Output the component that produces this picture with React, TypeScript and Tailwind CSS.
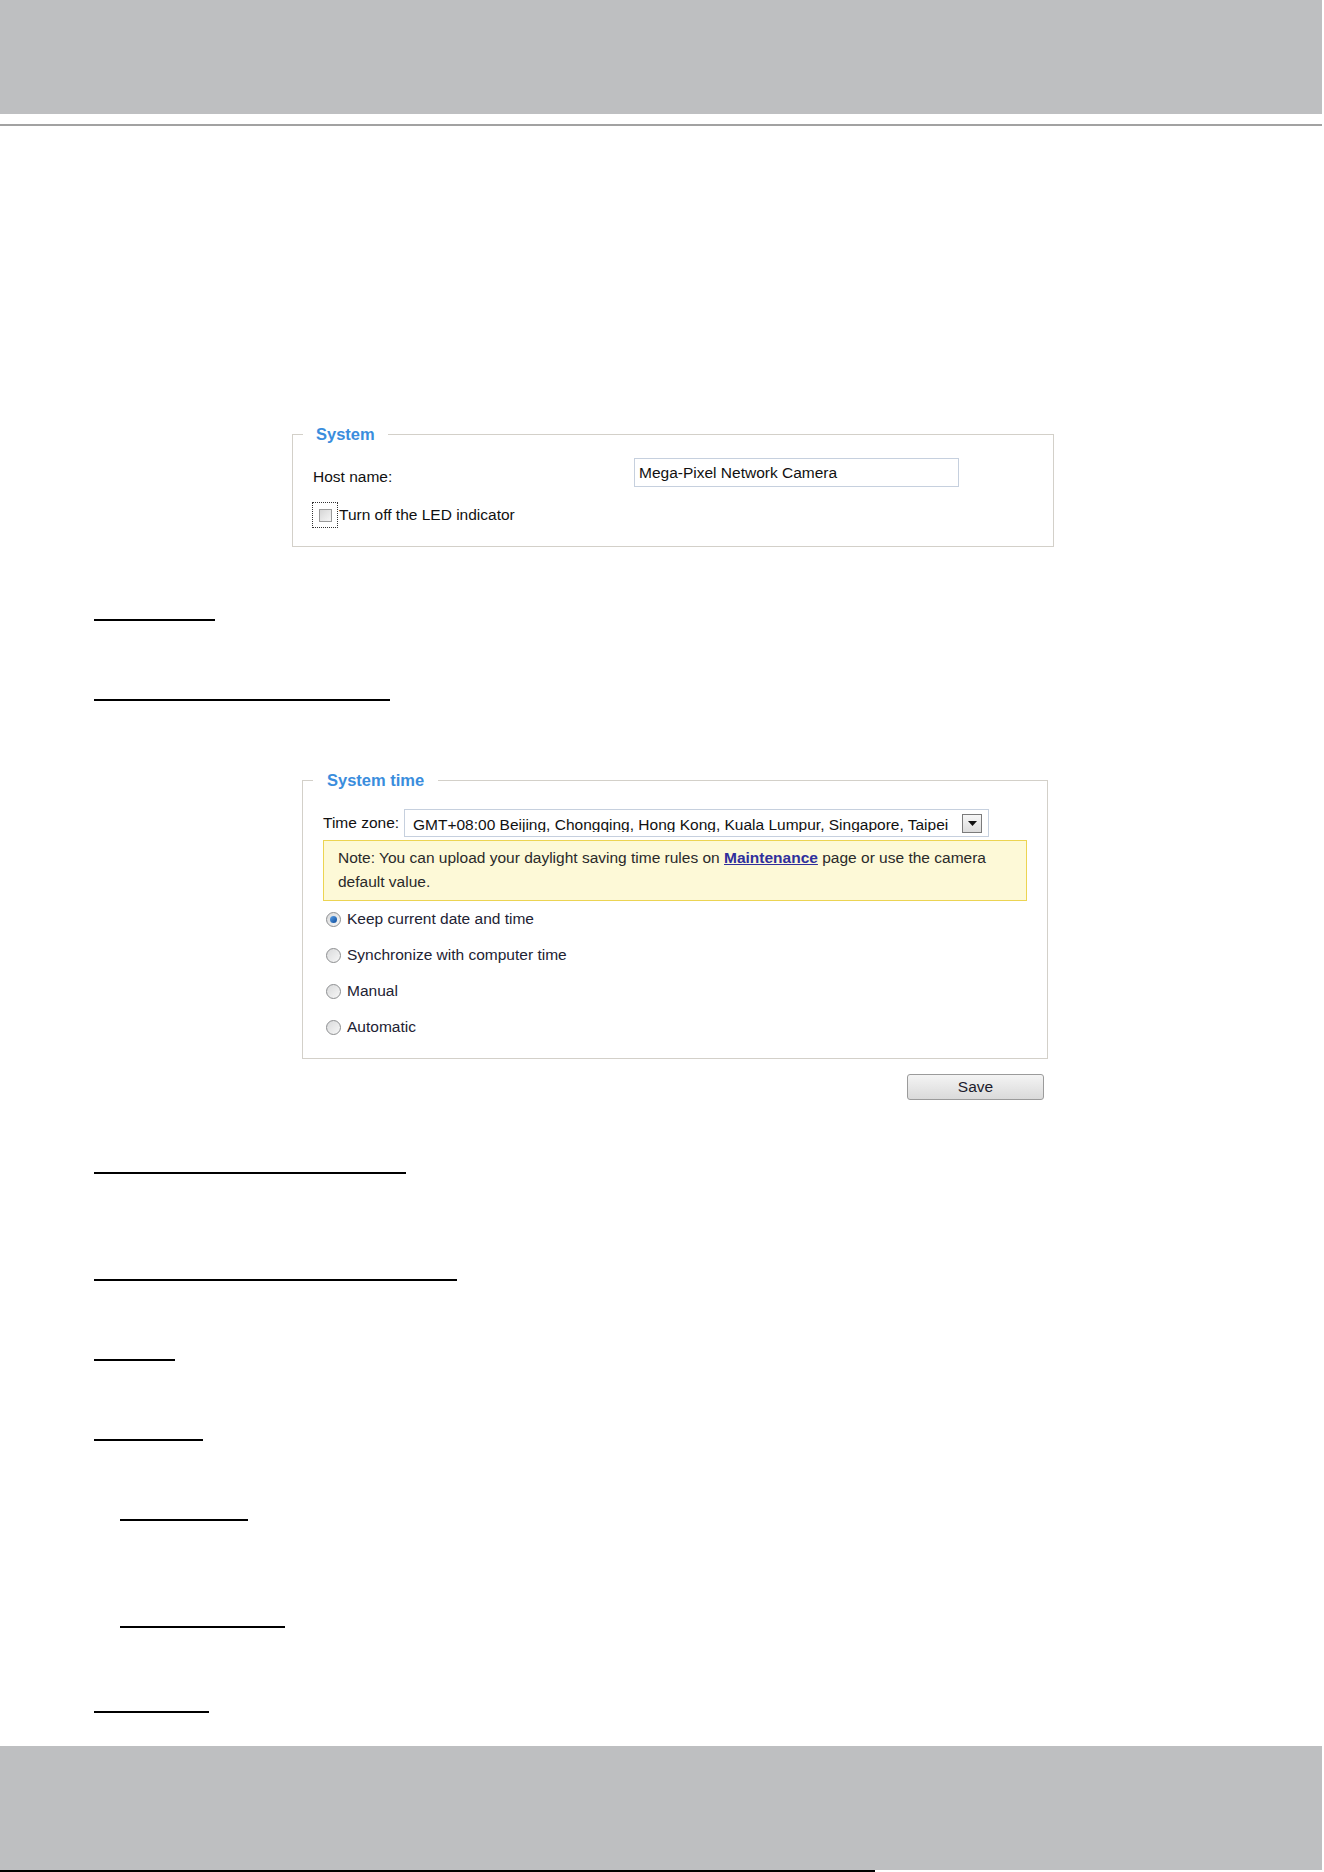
import React from "react";

function Rule({ ml, w, mt }: { ml: string; w: string; mt: string }) {
  return <div className={`h-[2px] bg-black ${ml} ${w} ${mt}`} />;
}

function Radio({ label, checked }: { label: string; checked?: boolean }) {
  return (
    <div className="flex h-[36px] items-center pl-[3px]">
      <div className="flex h-[15px] w-[15px] items-center justify-center rounded-full border border-[#8c8e90] bg-gradient-to-br from-[#d9dadb] to-[#f7f7f7]">
        {checked && (
          <div className="h-[7px] w-[7px] rounded-full bg-gradient-to-br from-[#5aa0e6] to-[#0b4c9c]" />
        )}
      </div>
      <span className="ml-[6px] text-[#222233]">{label}</span>
    </div>
  );
}

export default function App() {
  return (
    <div className="min-h-[1872px] w-[1324px] bg-white font-['Liberation_Sans',Arial,sans-serif] text-[15.5px] text-[#111]">
      {/* header band */}
      <div className="mr-[2px] h-[114px] bg-[#bebfc1]" />
      <div className="mr-[2px] mt-[10px] h-[2px] bg-[#a2a2a2]" />

      {/* System */}
      <fieldset className="ml-[292px] mt-[298px] w-[762px] border border-[#d3d0c9]">
        <legend className="ml-[10px] px-[13px] text-[16.5px] font-bold leading-[20px] text-[#3a8ddd]">
          System
        </legend>
        <div className="px-[20px] pb-[18px] pt-[14px]">
          <div className="flex h-[29px] items-start">
            <span className="w-[321px] pt-[9px] leading-[20px]">Host name:</span>
            <div className="flex h-[29px] w-[325px] items-center border border-[#c6d0de] pl-[4px]">
              Mega-Pixel Network Camera
            </div>
          </div>
          <div className="mt-[15px] flex h-[26px] items-center">
            <div className="ml-[-1px] flex h-[26px] w-[26px] items-center justify-center border border-dotted border-[#333]">
              <div className="h-[13px] w-[13px] border border-[#9a9a9a] bg-gradient-to-br from-[#d6d6d6] to-[#f6f6f6]" />
            </div>
            <span className="ml-[1px]">Turn off the LED indicator</span>
          </div>
        </div>
      </fieldset>

      <Rule ml="ml-[94px]" w="w-[121px]" mt="mt-[72px]" />
      <Rule ml="ml-[94px]" w="w-[296px]" mt="mt-[78px]" />

      {/* System time */}
      <fieldset className="ml-[302px] mt-[69px] w-[745px] border border-[#d3d0c9]">
        <legend className="ml-[10px] px-[14px] text-[16.5px] font-bold leading-[20px] text-[#3a8ddd]">
          System time
        </legend>
        <div className="px-[20px] pb-[13px] pt-[19px]">
          <div className="flex h-[28px] items-center">
            <span className="w-[81px]">Time zone:</span>
            <div className="flex h-[28px] w-[585px] items-start border border-[#c6d0de]">
              <div className="ml-[8px] mt-[3px] h-[19px] w-[548px] overflow-hidden whitespace-nowrap leading-[24px]">
                GMT+08:00 Beijing, Chongqing, Hong Kong, Kuala Lumpur, Singapore, Taipei
              </div>
              <div className="ml-[1px] mt-[4px] flex h-[19px] w-[20px] items-center justify-center border border-[#7b7b7b] bg-gradient-to-b from-[#f7f7f7] to-[#dcdcdc]">
                <svg width="9" height="5" viewBox="0 0 9 5">
                  <path d="M0 0h9L4.5 5z" fill="#111" />
                </svg>
              </div>
            </div>
          </div>
          <div className="mt-[3px] h-[61px] w-[704px] border border-[#ecd452] bg-[#fdf9d7] pl-[14px] pt-[5px] leading-[24px] text-[#2a2a2a]">
            <p>
              Note: You can upload your daylight saving time rules on{" "}
              <a className="font-bold text-[#2f2f9c] underline">Maintenance</a> page or use the camera
              default value.
            </p>
          </div>
          <Radio label="Keep current date and time" checked />
          <Radio label="Synchronize with computer time" />
          <Radio label="Manual" />
          <Radio label="Automatic" />
        </div>
      </fieldset>

      <div className="ml-[907px] mt-[15px] flex h-[26px] w-[137px] items-center justify-center rounded-[3px] border border-[#9b9b9b] bg-gradient-to-b from-[#f4f4f4] to-[#dadada] text-[#1c1c2c]">
        Save
      </div>

      <Rule ml="ml-[94px]" w="w-[312px]" mt="mt-[72px]" />
      <Rule ml="ml-[94px]" w="w-[363px]" mt="mt-[105px]" />
      <Rule ml="ml-[94px]" w="w-[81px]" mt="mt-[78px]" />
      <Rule ml="ml-[94px]" w="w-[109px]" mt="mt-[78px]" />
      <Rule ml="ml-[120px]" w="w-[128px]" mt="mt-[78px]" />
      <Rule ml="ml-[120px]" w="w-[165px]" mt="mt-[105px]" />
      <Rule ml="ml-[94px]" w="w-[115px]" mt="mt-[83px]" />

      {/* footer band */}
      <div className="mr-[2px] mt-[33px] h-[124px] bg-[#bebfc1]" />
      <div className="h-[2px] w-[875px] bg-black" />
    </div>
  );
}
